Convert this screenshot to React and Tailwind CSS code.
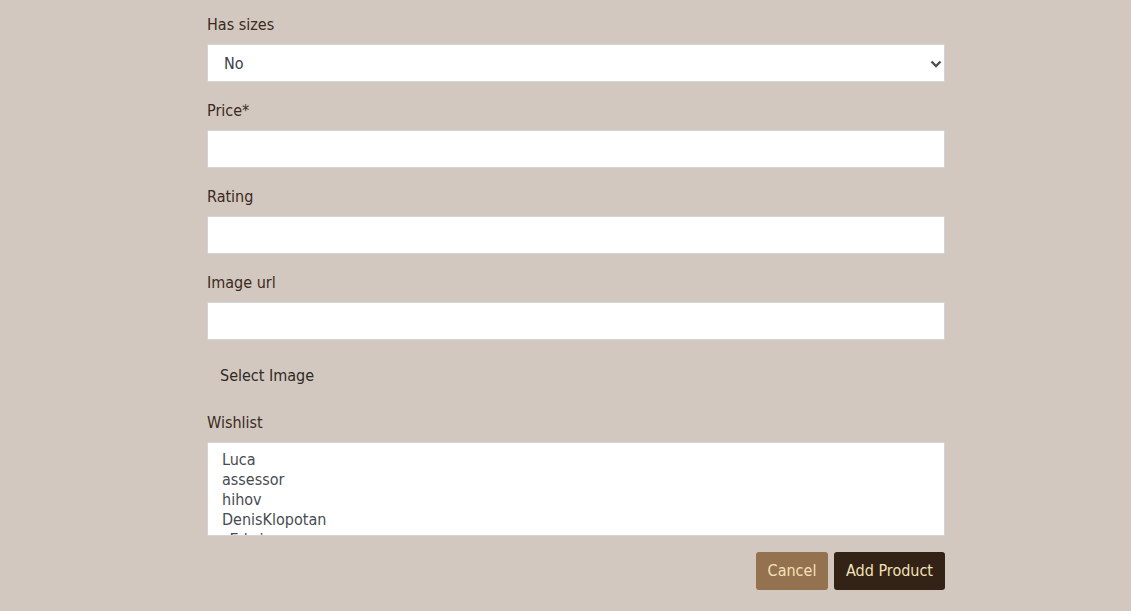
import React from 'react'

const users = ['Luca', 'assessor', 'hihov', 'DenisKlopotan', 'sEdwin', 'maria']

function Field({ label, children }) {
  return (
    <div className="mb-4">
      <label className="block mb-2 h-6 leading-6 pt-px text-[#3b2a1d]">{label}</label>
      {children}
    </div>
  )
}

export default function App() {
  return (
    <div
      className="min-h-screen bg-[#d2c8bf] pt-3"
      style={{ fontFamily: '"DejaVu Sans Condensed", "DejaVu Sans", sans-serif' }}
    >
      <form className="w-[738px] ml-[207px] text-[16px]">
        <Field label="Has sizes">
          <div className="flex items-center justify-between h-[38px] bg-white border border-[#cfd3da] pl-4 pr-[2px] text-[#3c4048]">
            <span className="pt-px">No</span>
            <svg width="12" height="9" viewBox="0 0 12 9" fill="none">
              <path d="M1.5 2.5 L6 7 L10.5 2.5" stroke="#4b5058" strokeWidth="2.4" />
            </svg>
          </div>
        </Field>

        <Field label="Price*">
          <input className="block w-full h-[38px] bg-white border border-[#cfd3da] px-3 outline-none" />
        </Field>

        <Field label="Rating">
          <input className="block w-full h-[38px] bg-white border border-[#cfd3da] px-3 outline-none" />
        </Field>

        <Field label="Image url">
          <input className="block w-full h-[38px] bg-white border border-[#cfd3da] px-3 outline-none" />
        </Field>

        <div className="mb-4">
          <button type="button" className="h-[38px] px-[13px] pt-px text-[#2e2a26]">Select Image</button>
        </div>

        <Field label="Wishlist">
          <div className="h-[94px] overflow-hidden bg-white border border-[#cfd3da] pl-[14px] pt-[7px] text-[#474b52]">
            {users.map(u => (
              <div key={u} className="h-5 leading-5">{u}</div>
            ))}
          </div>
        </Field>

        <div className="flex justify-end gap-[6px]">
          <button type="button" className="h-[38px] w-[72px] rounded-[3px] bg-[#94714f] text-[#f3e1b8]">Cancel</button>
          <button type="button" className="h-[38px] px-[12px] rounded-[3px] bg-[#332316] text-[#f3e1b8]">Add Product</button>
        </div>
      </form>
    </div>
  )
}
